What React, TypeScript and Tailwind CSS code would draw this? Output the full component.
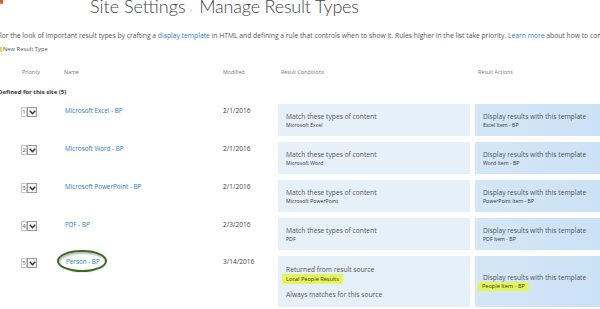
import React from "react";

function Sel({ n }: { n: number }) {
  return (
    <div className="flex h-[10px] w-[16px] items-stretch">
      <div className="flex w-[6px] items-center justify-center border border-[#c6c6c6] bg-white text-[6px] leading-none text-[#555]">
        {n}
      </div>
      <div className="flex w-[10px] items-center justify-center border border-[#9a9a9a] bg-[#f4f4f4]">
        <svg width="7" height="5" viewBox="0 0 7 5">
          <path d="M0.8 0.8 L3.5 3.8 L6.2 0.8" fill="none" stroke="#333" strokeWidth="1.4" />
        </svg>
      </div>
    </div>
  );
}

type Row = { n: number; name: string; date: string; cond: string; sub: string; action: string };

const rows: Row[] = [
  { n: 1, name: "Microsoft Excel - BP", date: "2/1/2016", cond: "Match these types of content", sub: "Microsoft Excel", action: "Excel Item - BP" },
  { n: 2, name: "Microsoft Word - BP", date: "2/1/2016", cond: "Match these types of content", sub: "Microsoft Word", action: "Word Item - BP" },
  { n: 3, name: "Microsoft PowerPoint - BP", date: "2/1/2016", cond: "Match these types of content", sub: "Microsoft PowerPoint", action: "PowerPoint Item - BP" },
  { n: 4, name: "PDF - BP", date: "2/3/2016", cond: "Match these types of content", sub: "PDF", action: "PDF Item - BP" },
];

export default function App() {
  return (
    <div className="h-[309px] w-[600px] overflow-hidden bg-white font-['Open_Sans',sans-serif] text-[#444]">
      {/* header */}
      <div className="flex h-[28px] items-start overflow-hidden">
        <div className="flex w-[90px] items-start">
          <div className="-mt-[14px] h-[18px] w-[12px] rounded-b-[6px] bg-[#e8542a]" />
          <div className="-mt-[15px] ml-[10px] text-[15px] leading-[16px] text-[#9a9a9a]">SharePoint</div>
        </div>
        <div className="-mt-[3px] flex items-baseline whitespace-nowrap font-['Lato',sans-serif] text-[18px] font-light leading-[18px] text-[#444]">
          <span>Site Settings</span>
          <span className="ml-[4px] mr-[7px] text-[10px] text-[#888]">›</span>
          <span className="tracking-[-0.2px]">Manage Result Types</span>
        </div>
      </div>
      {/* description */}
      <div className="h-[16px] whitespace-nowrap text-[6.76px] leading-[16px] text-[#555]">
        lor the look of important result types by crafting a <span className="text-[#2a80c4]">display template</span> in HTML and defining a rule that controls when to show it. Rules higher in the list take priority. <span className="text-[#2a80c4]">Learn more</span> about how to configure result types.
      </div>
      {/* new result type */}
      <div className="flex h-[10px] items-center text-[5.8px] leading-[10px] text-[#555]">
        <span className="mr-[1px] inline-block h-[5px] w-[2px] bg-[#f0d25a]" />
        New Result Type
      </div>
      {/* column headers */}
      <div className="mt-[12px] flex h-[12px] items-center text-[5.3px] leading-[12px] text-[#777]">
        <div className="w-[22px]" />
        <div className="w-[42px]">Priority</div>
        <div className="w-[159px]">Name</div>
        <div className="w-[58px]">Modified</div>
        <div className="w-[197px]">Result Conditions</div>
        <div>Result Actions</div>
      </div>
      {/* group */}
      <div className="mt-[8px] h-[12px] text-[6px] font-bold leading-[12px] text-[#333]">
        <span className="-ml-[2px]">Defined for this site (5)</span>
      </div>
      {/* rows */}
      <div className="mt-[6px] flex flex-col">
        {rows.map((r) => (
          <div key={r.n} className="flex h-[38px] items-start">
            <div className="w-[21px]" />
            <div className="w-[44px] pt-[3px]">
              <Sel n={r.n} />
            </div>
            <div className="w-[158px] text-[6.3px] leading-[14px] text-[#2a80c4]">{r.name}</div>
            <div className="w-[55px] text-[6.6px] leading-[14px] text-[#444]">{r.date}</div>
            <div className="flex h-[32px] w-[192px] flex-col justify-center whitespace-nowrap bg-[#e5f0f9] pl-[8px]">
              <div className="text-[6.7px] leading-[9px] text-[#555]">{r.cond}</div>
              <div className="text-[5.2px] leading-[8px] text-[#333]">{r.sub}</div>
            </div>
            <div className="ml-[5px] flex h-[32px] flex-1 flex-col justify-center whitespace-nowrap bg-[linear-gradient(90deg,#d4e7f7,#cbe1f5)] pl-[8px]">
              <div className="text-[6.7px] leading-[9px] text-[#555]">Display results with this template</div>
              <div className="text-[5.2px] leading-[8px] text-[#333]">{r.action}</div>
            </div>
          </div>
        ))}
        <div className="flex h-[53px] items-start">
          <div className="w-[21px]" />
          <div className="w-[44px] pt-[2px]">
            <Sel n={5} />
          </div>
          <div className="w-[158px] text-[6.3px] leading-[12px] text-[#2a80c4]">
            <span className="relative ml-[1px] inline-block">
              Person - BP
              <span className="absolute -left-[9px] -right-[7px] -top-[6px] -bottom-[4px] rounded-[50%] border-[2px] border-[#3d6a22] shadow-[inset_1px_2px_2px_rgba(0,0,0,0.25),0_0_2px_rgba(0,0,0,0.2)]" />
            </span>
          </div>
          <div className="w-[55px] text-[6.6px] leading-[12px] text-[#444]">3/14/2016</div>
          <div className="flex h-[51px] w-[192px] flex-col justify-center whitespace-nowrap bg-[#e5f0f9] pl-[4px]">
            <div className="pl-[4px] text-[6.7px] leading-[9px] text-[#555]">Returned from result source</div>
            <div className="flex">
              <span className="bg-[#e6f45c] px-[4px] text-[5.6px] leading-[10px] text-[#333]">Local People Results</span>
            </div>
            <div className="mt-[6px] pl-[4px] text-[6.7px] leading-[9px] text-[#555]">Always matches for this source</div>
          </div>
          <div className="ml-[5px] flex h-[51px] flex-1 flex-col justify-center whitespace-nowrap bg-[linear-gradient(90deg,#d4e7f7,#cbe1f5)] pl-[3px]">
            <div className="pl-[5px] text-[6.7px] leading-[9px] text-[#555]">Display results with this template</div>
            <div className="flex">
              <span className="bg-[#e6f45c] px-[4px] text-[5.6px] leading-[9px] text-[#333]">People Item - BP</span>
            </div>
          </div>
        </div>
      </div>
    </div>
  );
}
